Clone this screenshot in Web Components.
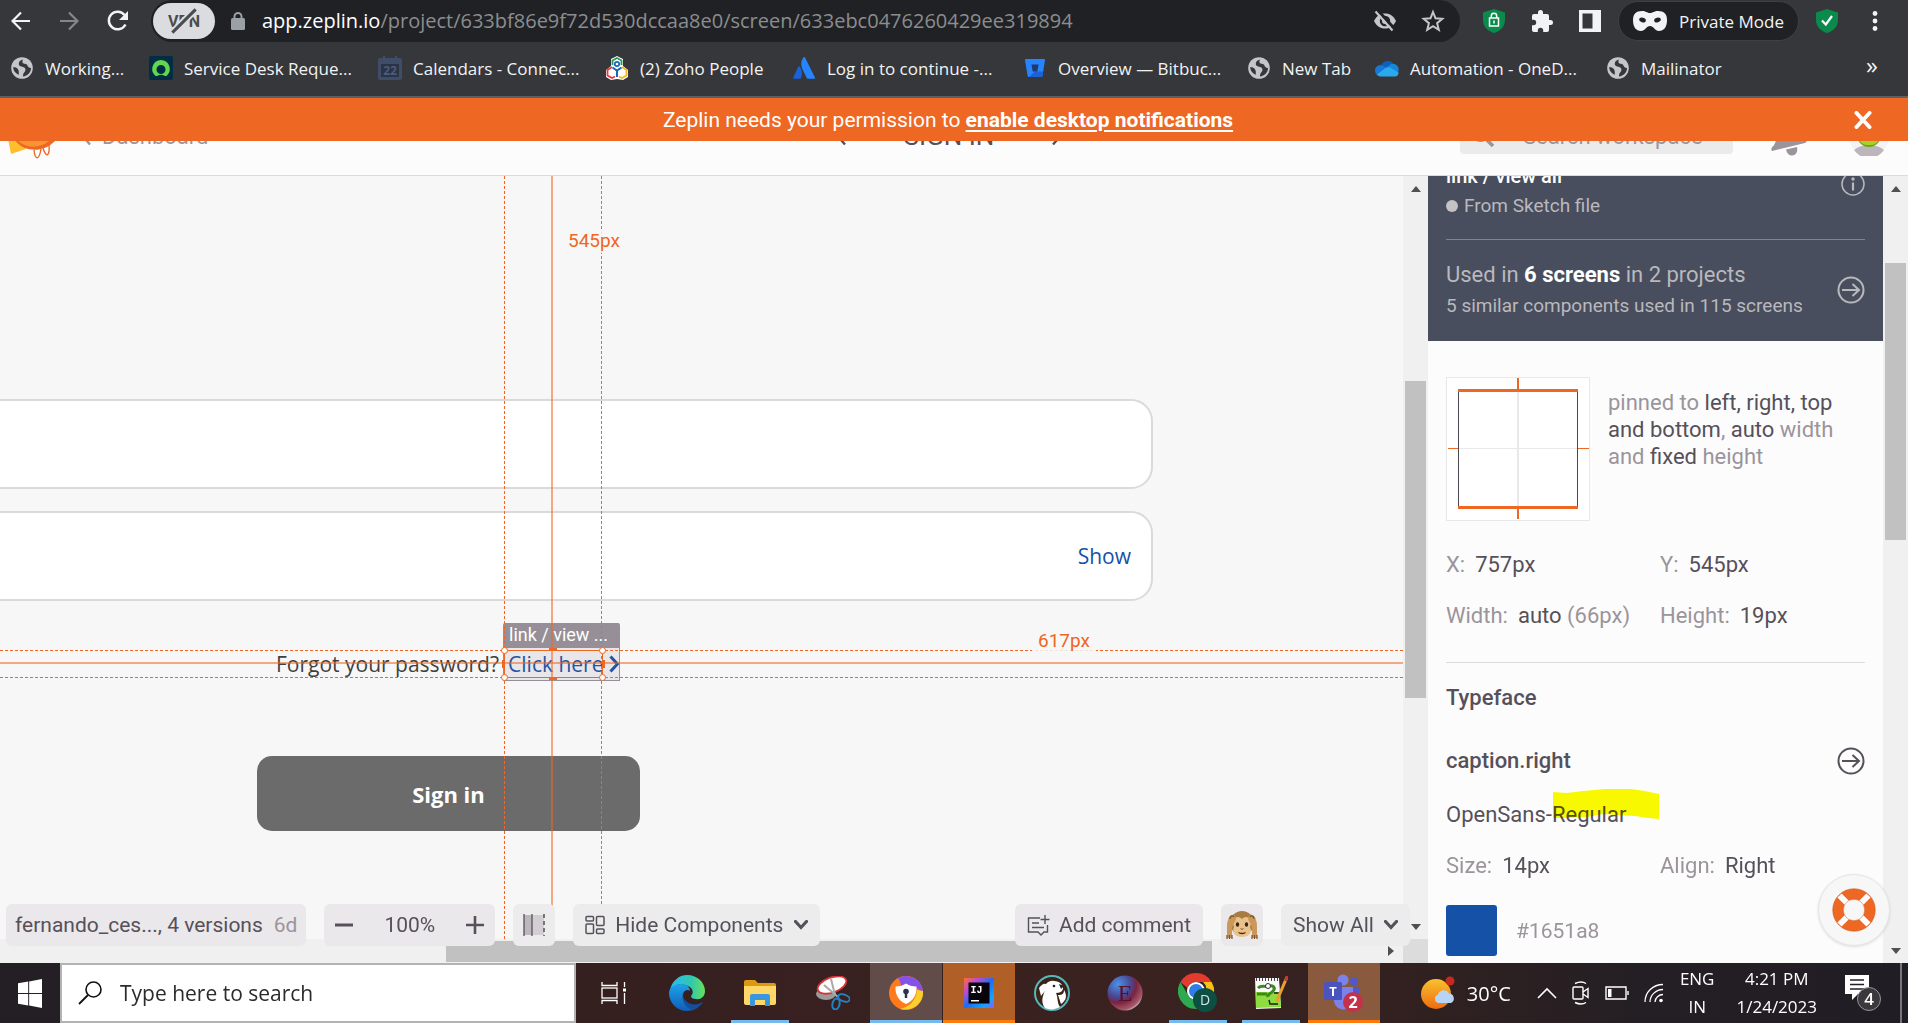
<!DOCTYPE html>
<html lang="en">
<head>
<meta charset="utf-8">
<title>Zeplin - SIGN IN</title>
<style>
html, body { height: 100%; margin: 0; }
body {
  overflow: hidden;
  font-family: "Open Sans", "Noto Sans", sans-serif;
  --orange: #ee6723;
  --ink: #56505a;
  --mute: #9b949b;
  --blue: #1651a8;
  --ui: Roboto, "Liberation Sans", sans-serif;
  --sans: "Open Sans", "Noto Sans", sans-serif;
}
</style>
</head>
<body>
<desktop-screen></desktop-screen>
<script>
const ICONS = {
  back: ['0 0 20 20', '<path d="M19 10H2M10 1.5L1.5 10l8.500 8.500" fill="none" stroke="currentColor" stroke-width="2.200"/>'],
  forward: ['0 0 20 20', '<path d="M1 10h17M10 1.500l8.500 8.500-8.500 8.500" fill="none" stroke="currentColor" stroke-width="2.200"/>'],
  reload: ['0 0 22 22', '<path d="M18.500 14.500A8.800 8.800 0 1 1 17.500 5" fill="none" stroke="currentColor" stroke-width="2.500"/><path d="M21 1v9h-9z" fill="currentColor"/>'],
  slash: ['0 0 24 24', '<path d="M2 22L22 2" stroke="#dadce0" stroke-width="6"/><path d="M2 22L22 2" stroke="#4a4c50" stroke-width="2.600"/>'],
  lock: ['0 0 14 18', '<rect y="6" width="14" height="12" rx="1.500" fill="currentColor"/><path d="M3.500 7V4.500a3.500 3.500 0 0 1 7 0V7" fill="none" stroke="currentColor" stroke-width="2"/>'],
  eyeoff: ['0 0 24 24', '<path d="M1 12C4 6 8 4.500 12 4.500S20 6 23 12c-3 6-7 7.500-11 7.500S4 18 1 12z" fill="currentColor"/><circle cx="12" cy="12" r="5.200" fill="#202124"/><circle cx="12" cy="12" r="3" fill="currentColor"/><path d="M5 1.500l18 20" stroke="#202124" stroke-width="3"/><path d="M2.500 2.500l17 19" stroke="currentColor" stroke-width="2.200"/>'],
  star: ['0 0 24 24', '<path d="M12 3l2.500 6.300 6.800.5-5.200 4.400 1.700 6.600L12 17.200l-5.800 3.600 1.700-6.600-5.200-4.400 6.800-.5z" fill="none" stroke="currentColor" stroke-width="2"/>'],
  shieldlock: ['0 0 22 24', '<path d="M11 0l11 3.500V11c0 6.500-4.500 11-11 13C4.500 22 0 17.500 0 11V3.500z" fill="#0a8a4b"/><rect x="6.500" y="9" width="9" height="8" fill="none" stroke="#fff" stroke-width="1.500"/><path d="M8.300 9V7a2.700 2.700 0 0 1 5.400 0v2M11 11.500v3" fill="none" stroke="#fff" stroke-width="1.500"/>'],
  puzzle: ['0 0 22 22', '<path d="M19.500 10H18V6a2 2 0 0 0-2-2h-4V2.500a2.500 2.500 0 0 0-5 0V4H3a2 2 0 0 0-2 2v3.800h1.500a2.700 2.700 0 0 1 0 5.400H1V20c0 1.100.9 2 2 2h3.800v-1.500a2.700 2.700 0 0 1 5.400 0V22H16a2 2 0 0 0 2-2v-5h1.500a2.500 2.500 0 0 0 0-5z" fill="currentColor"/>'],
  sidepanel: ['0 0 22 22', '<path d="M0 0h22v22H0zM3.500 3.500v15h10v-15z" fill="currentColor" fill-rule="evenodd"/>'],
  mask: ['0 0 34 20', '<path d="M9 0c4 0 5 2 8 2s4-2 8-2c6 0 9 3 9 9 0 7-3 11-8 11-4 0-5.500-5-9-5s-5 5-9 5c-5 0-8-4-8-11 0-6 3-9 9-9z" fill="#f1f3f4"/><ellipse cx="9.500" cy="9" rx="3.400" ry="2.200" fill="#202124" transform="rotate(15 9.500 9)"/><ellipse cx="24.500" cy="9" rx="3.400" ry="2.200" fill="#202124" transform="rotate(-15 24.500 9)"/>'],
  shieldcheck: ['0 0 22 24', '<path d="M11 0l11 3.500V11c0 6.500-4.500 11-11 13C4.500 22 0 17.500 0 11V3.500z" fill="#0a8a4b"/><path d="M6 11.500l3.800 4L16 7" fill="none" stroke="#fff" stroke-width="2.200"/>'],
  dots: ['0 0 6 20', '<circle cx="3" cy="2.500" r="2.400" fill="currentColor"/><circle cx="3" cy="10" r="2.400" fill="currentColor"/><circle cx="3" cy="17.500" r="2.400" fill="currentColor"/>'],
  globe: ['0 0 22 22', '<circle cx="11" cy="11" r="10.800" fill="#c3c6ca"/><path d="M12 2.500c-3 .8-4.500 2.600-4.200 4.800.3 2.300 3 2 5 3 2.300 1.200 2 3.700.4 5.200-1 1-1.200 2-1.200 4 4.500-.5 8-4 8-8.500-2 0-3-1-3.500-2.500-1-2.500-4-1-5-3-.4-1 .2-2 .5-3zM2.300 10c2 0 3.500.7 4.500 2 1.200 1.500 1 3 1 5.800C4.800 16.500 2 13.500 2.300 10z" fill="#36373a"/>'],
  desk: ['0 0 24 24', '<rect width="24" height="24" rx="2" fill="#032d42"/><path d="M12 4a9 9 0 0 0-6 15.500 2 2 0 0 0 2.500.2c2.200-1.400 4.800-1.400 7 0a2 2 0 0 0 2.500-.2A9 9 0 0 0 12 4zm0 5a4.500 4.500 0 1 1 0 9 4.500 4.500 0 0 1 0-9z" fill="#62d84e" fill-rule="evenodd"/>'],
  calendar: ['0 0 24 24', '<path d="M2 2h3V0h2v2h10V0h2v2h3a2 2 0 0 1 2 2v18a2 2 0 0 1-2 2H2a2 2 0 0 1-2-2V4c0-1.100.9-2 2-2z" fill="#3f4d68"/><path d="M3 8h18v13H3z" fill="#2b3344"/><text x="12" y="18.500" font-size="12" font-weight="700" text-anchor="middle" fill="#4a5c80">22</text>'],
  zoho: ['0 0 24 24', '<path d="M12 0l6 3v7l5 4v7l-5 3-6-1-6 1-5-3v-7l5-4V3z" fill="#fff"/><path d="M7.500 9V4.500L12 2l4.500 2.500V9" fill="none" stroke="#1f9b57" stroke-width="1.800"/><path d="M7 11l-4.500 3v5.500L7 22l3-1.500" fill="none" stroke="#e03a3a" stroke-width="1.800"/><path d="M17 11l4.500 3v5.500L17 22l-3-1.500" fill="none" stroke="#f2b61c" stroke-width="1.800"/><circle cx="12" cy="8" r="2.200" fill="none" stroke="#1c66b5" stroke-width="1.700"/><path d="M7.500 11.500l4.500 3 4.500-3M12 14v7" fill="none" stroke="#1c66b5" stroke-width="2"/>'],
  atlassian: ['0 0 22 22', '<path d="M6.500 9.500c-.5-.5-1-.4-1.300.2L.3 20.500c-.3.600.1 1.300.8 1.300h6.500c2-4 1.800-9-1.100-12.300z" fill="#1a62d6"/><path d="M10.300.5C7.500 5 8 9 9.700 12.700l4.200 8.600c.1.300.5.500.8.500h6.500c.7 0 1-.7.700-1.300L12 .6c-.3-.7-1.200-.7-1.700-.1z" fill="#2684ff"/>'],
  bitbucket: ['0 0 20 20', '<path d="M1 1h18a1 1 0 0 1 1 1.200l-2.600 16a1 1 0 0 1-1 .8H3.700a1 1 0 0 1-1-.8L0 2.200A1 1 0 0 1 1 1z" fill="#2684ff"/><path d="M10 13.500h8.200l-.8 4.700a1 1 0 0 1-1 .8H4z" fill="#1a62d6"/><path d="M6.500 6.500h7l-1.200 7H7.700z" fill="#22396b"/>'],
  onedrive: ['0 0 24 18' , '<path d="M6 7a7 7 0 0 1 13-1l-9 8z" fill="#0f5fbd"/><circle cx="5.500" cy="11.500" r="5.500" fill="#1479d4"/><circle cx="18" cy="10.500" r="5.700" fill="#1488dd"/><path d="M2 15.500L11 8.500c2-1 3.500-.5 5 .5l7.600 4.500c0 2.500-1.500 4-3.700 4H5.500C4 17.500 2.700 16.800 2 15.500z" fill="#2aa9ee"/>'],
  close: ['0 0 18 18', '<path d="M2.500 2l13 14M15.500 2L2.500 16" stroke="#fff" stroke-width="4" stroke-linecap="round"/>'],
  zeplin: ['0 0 50 60', '<path d="M-1 28l4 20 15-5-6-15z" fill="#ffbe2e"/><path d="M7 28v6c8 12 28 14 41 0l1-6z" fill="#ee6723"/><path d="M8 28v4c7 11 26 12 36 0l2-4z" fill="#f79533"/><path d="M26 44c1 10 5 11 7-1M35 42c3 10 7 9 6-4" fill="none" stroke="#ee6723" stroke-width="1.400"/>'],
  left: ['0 0 10 20', '<path d="M9 1.500L1.500 10 9 18.500" fill="none" stroke="currentColor" stroke-width="2.400"/>'],
  right: ['0 0 10 20', '<path d="M1 1.500L8.500 10 1 18.500" fill="none" stroke="currentColor" stroke-width="2.400"/>'],
  magnifier: ['0 0 24 24', '<circle cx="9.500" cy="9.500" r="7" fill="none" stroke="currentColor" stroke-width="3.200"/><path d="M14.500 14.500l7.500 7.500" stroke="currentColor" stroke-width="3.600"/>'],
  bell: ['0 0 36 40', '<path d="M1 35c-1.500-1-.5-4 1.500-5C8 22 5 8 16 4c12-3 11 12 18 18 2 1 2.500 4 0 5z" fill="currentColor"/><path d="M15 33.500l11-2.500c1 5-1 8-5 8.500-3 0-5-2-6-6z" fill="currentColor"/>'],
  avatar: ['0 0 40 40', '<circle cx="20" cy="20" r="20" fill="#f4f3f4"/><path d="M5 34a17 9 0 0 1 30 0 18 18 0 0 1-30 0z" fill="#bcb6bc"/><circle cx="20" cy="19" r="12" fill="#6fa61b"/><path d="M20 29A10 10 0 0 0 31 21c-6 4-16 4-22 0a10 10 0 0 0 11 8z" fill="#a5d12a"/>'],
  info: ['0 0 24 24', '<circle cx="12" cy="12" r="11" fill="none" stroke="currentColor" stroke-width="1.500"/><circle cx="12" cy="7" r="1.700" fill="currentColor"/><path d="M12 10.500v8" stroke="currentColor" stroke-width="2.200"/>'],
  go: ['0 0 28 28', '<circle cx="14" cy="14" r="12.500" fill="none" stroke="currentColor" stroke-width="2"/><path d="M5 14h16.500M15.500 8l6.500 6-6.500 6" fill="none" stroke="currentColor" stroke-width="2"/>'],
  pins: ['0 0 144 144', '<rect x=".5" y=".5" width="143" height="143" fill="#fff" stroke="#e9e8e9"/><path d="M72 12v120" stroke="#e9e8e9" stroke-width="2"/><path d="M12 71.500h120" stroke="#e9e8e9"/><path d="M12.500 12v120M131.500 12v120" stroke="#4d4850"/><path d="M12 13.500h120M12 130.500h120" stroke="#ee6723" stroke-width="3"/><path d="M72 1v12M72 131v11" stroke="#ee6723" stroke-width="2"/><path d="M2 71.500h10M132 71.500h11" stroke="#ee6723"/>'],
  highlight: ['0 0 106 30', '<path d="M0 3l14 1 16-2 22-2h26l14 2 14 3v25l-11-1-13-2-18-1-14-1-16 3-18 1H0z" fill="#fbfc00"/>'],
  lifebuoy: ['0 0 44 44', '<circle cx="22" cy="22" r="16" fill="none" stroke="#ee6723" stroke-width="10.500"/><g stroke="#fff" stroke-width="6"><path d="M7.500 7.500l8 8M36.500 7.500l-8 8M7.500 36.500l8-8M36.500 36.500l-8-8"/></g><circle cx="22" cy="22" r="21.300" fill="none" stroke="#c9541b" stroke-opacity=".5"/><circle cx="22" cy="22" r="10.700" fill="none" stroke="#c9541b" stroke-opacity=".5"/>'],
  minus: ['0 0 20 20', '<path d="M1 10h18" stroke="currentColor" stroke-width="3"/>'],
  plus: ['0 0 20 20', '<path d="M1 10h18M10 1v18" stroke="currentColor" stroke-width="2.600"/>'],
  layout: ['0 0 22 24', '<path d="M1 2h8v20H1z" fill="#bdb6be"/><path d="M9 2h12v20H9z" fill="#d3ced4"/><path d="M1 1v22M9 1v22" stroke="#56505a" stroke-width="1.300"/><path d="M21 1v22" stroke="#56505a" stroke-width="1.500" stroke-dasharray="4 3"/>'],
  grid: ['0 0 20 20', '<g fill="none" stroke="currentColor" stroke-width="1.500"><rect x="1" y="1.500" width="7.500" height="4.500" rx="1"/><rect x="1" y="9" width="7.500" height="9.500" rx="1"/><rect x="11.500" y="1.500" width="7.500" height="9" rx="1"/><rect x="11.500" y="14" width="7.500" height="4.500" rx="1"/></g>'],
  chevron: ['0 0 14 10', '<path d="M1.500 1.500L7 7.500l5.500-6" fill="none" stroke="currentColor" stroke-width="3.200" stroke-linecap="round"/>'],
  comment: ['0 0 24 22', '<path d="M13 4H1.500v14H11l3 3 3-3h3.500v-7M18 1v9M13.500 5.500h9M5 9h7M5 13.500h12" fill="none" stroke="currentColor" stroke-width="1.400"/>'],
  monkey: ['0 0 32 30', '<ellipse cx="16" cy="13" rx="12" ry="12" fill="#a87b44"/><path d="M16 9c3-4 9-2 9 4 0 2-1 3-1 4 3 6-2 10-8 10s-11-4-8-10c0-1-1-2-1-4 0-6 6-8 9-4z" fill="#e9c18b"/><path d="M2 10c1-6 7-7 8-2 0 4-4 5-4 12v8H1V18c0-3 0-5 1-8zM30 10c-1-6-7-7-8-2 0 4 4 5 4 12v8h5V18c0-3 0-5-1-8z" fill="#c9985a"/><path d="M4 9c0-3 3-4 4-2M28 9c0-3-3-4-4-2M1 29v-4M3.500 29v-4M6 29v-4M26 29v-4M28.500 29v-4M31 29v-4" fill="none" stroke="#7a5228" stroke-width="1.200"/><ellipse cx="11.500" cy="14.500" rx="1.700" ry="2.300" fill="#3a2312"/><ellipse cx="20.500" cy="14.500" rx="1.700" ry="2.300" fill="#3a2312"/><path d="M14.500 18.500l1.500 1 1.500-1" fill="none" stroke="#7a5228"/><path d="M12 22c2 1 6 1 8 0-1 3-7 3-8 0z" fill="#4c2412"/>'],
  linkarrow: ['0 0 10 18', '<path d="M1.500 1.500L8.500 9l-7 7.500" fill="none" stroke="#1651a8" stroke-width="3"/>'],
  windows: ['0 0 20 24', '<path d="M0 3.400L8.500 2v9.500H0zM9.300 1.900L20 0v11.500H9.300zM0 12.500h8.500V22L0 20.600zM9.300 12.500H20V24L9.300 22.100z" fill="#fff"/>'],
  find: ['0 0 24 24', '<circle cx="15.500" cy="8.500" r="7.500" fill="none" stroke="#111" stroke-width="1.600"/><path d="M10 14L1 23" stroke="#111" stroke-width="1.800"/>'],
  taskview: ['0 0 26 24', '<g fill="none" stroke="#fff" stroke-width="1.300"><rect x="1" y="7" width="15" height="10"/><path d="M1 1v3.500h15V1M1 23v-3.500h15V23M23.500 1v5M23.500 12v11"/></g><path d="M22 7.500h3v3h-3z" fill="#fff"/>'],
  edge: ['0 0 36 36', '<defs><linearGradient id="ea" x1="0" x2="1"><stop offset="0" stop-color="#2fb8f0"/><stop offset=".6" stop-color="#2fc8b0"/><stop offset="1" stop-color="#68e05a"/></linearGradient><linearGradient id="eb" x2="0" y2="1"><stop offset="0" stop-color="#1fa3ec"/><stop offset="1" stop-color="#0f5db4"/></linearGradient></defs><path d="M1 15C3 6 10 0 18 0c11 0 18 8 18 16 0 6-5 9-9 8-3 0-5-1-5-3 3-3 2-8-3-10C12 8 4 10 1 15z" fill="url(#ea)"/><path d="M0 18c0-6 6-9 12-9 5 0 9 3 9 7-2-2-6-1-7 3-1 5 2 10 8 11 4 1 8 0 11-3C30 33 24 36 18 36 8 36 0 28 0 18z" fill="url(#eb)"/><path d="M14 19c-2 7 3 14 10 16 4-1 8-5 10-8-3 2-8 3-12 2-5-2-8-5-8-10z" fill="#124f9c"/>'],
  folder: ['0 0 32 28', '<path d="M0 3a2 2 0 0 1 2-2h9l3 3h16a2 2 0 0 1 2 2v4H0z" fill="#dd9a10"/><path d="M0 7h32v17a2 2 0 0 1-2 2H2a2 2 0 0 1-2-2z" fill="#ffd766"/><path d="M6 27V17a2 2 0 0 1 2-2h16a2 2 0 0 1 2 2v10h-5v-6H11v6z" fill="#3a96dd"/>'],
  snip: ['0 0 34 34', '<ellipse cx="10" cy="18" rx="10" ry="6" fill="#9b9b9b"/><ellipse cx="16" cy="9" rx="15" ry="7.500" fill="#fff" stroke="#d53535" stroke-width="1.800" transform="rotate(-20 16 9)"/><path d="M8 9l14 12M15 3l4 16" stroke="#aaa" stroke-width="2"/><ellipse cx="28" cy="22" rx="6" ry="3.300" fill="none" stroke="#2383c4" stroke-width="2" transform="rotate(20 28 22)"/><ellipse cx="20" cy="28" rx="3.500" ry="5.500" fill="none" stroke="#2383c4" stroke-width="2" transform="rotate(15 20 28)"/>'],
  avast: ['0 0 34 34', '<circle cx="17" cy="17" r="17" fill="#ff7a1a"/><path d="M9 2a17 17 0 0 1 25 15c-5-6-15-9-22-6 0-4-1-6-3-9z" fill="#8452e8"/><path d="M34 15c1 12-10 21-23 18 9-2 16-8 17-19z" fill="#f8cf2d"/><path d="M17 7.500c3 2 6 3 10.500 3C28 19 24 25 17 28 10 25 6 19 6.500 10.500 11 10.500 14 9.500 17 7.500z" fill="#fff"/><circle cx="17" cy="15.500" r="2.800" fill="#2b3350"/><path d="M15.800 16h2.400v6h-2.400z" fill="#2b3350"/>'],
  intellij: ['0 0 30 30', '<defs><linearGradient id="ij" x2="1" y2="1"><stop offset="0" stop-color="#ff6d2d"/><stop offset=".25" stop-color="#c14bd0"/><stop offset=".5" stop-color="#1b6df5"/><stop offset=".8" stop-color="#12a5ff"/><stop offset="1" stop-color="#9a55ff"/></linearGradient></defs><path d="M0 0h30v30H0z" fill="url(#ij)"/><path d="M4.500 4.500h21v21h-21z" fill="#08040a"/><text x="6.500" y="15" font-size="10" font-family="Liberation Mono, monospace" font-weight="700" fill="#fff">IJ</text><path d="M7 22h8v1.500H7z" fill="#fff"/>'],
  beaver: ['0 0 36 36', '<circle cx="18" cy="18" r="17" fill="#3a2417" stroke="#56b7bd" stroke-width="2"/><path d="M11 33c-6-8 0-15 0-19-1-5 4-9 9-8 6 0 9 4 9 8-1 3-4 4-7 4 2 4 1 10 4 14-5 3-11 3-15 1z" fill="#fff"/><path d="M5 13c4-5 6-5 8-3 0 5-3 7-6 11z" fill="#fff"/><circle cx="20" cy="11" r="1.300" fill="#222"/><path d="M25 9l5 2-3 3z" fill="#222"/><path d="M24 20c5 0 6-2 6-5 3 5 3 10-3 14z" fill="#fff"/>'],
  eball: ['0 0 36 36', '<defs><radialGradient id="eg" cx=".3" cy=".25" r=".85"><stop offset="0" stop-color="#4a92e8"/><stop offset=".45" stop-color="#4a4590"/><stop offset=".62" stop-color="#7a2440"/><stop offset=".88" stop-color="#a6586b"/><stop offset="1" stop-color="#ddd"/></radialGradient></defs><circle cx="18" cy="18" r="17.500" fill="url(#eg)"/><text x="18" y="26" text-anchor="middle" font-size="24" font-family="Liberation Serif, serif" fill="#5c1028">E</text>'],
  chrome: ['0 0 40 40', '<path d="M18 0a18 18 0 0 1 15.600 9H18a9 9 0 0 0-8.500 6L2.400 9A18 18 0 0 1 18 0z" fill="#e33b2e"/><path d="M33.600 9A18 18 0 0 1 18 36l8-14a9 9 0 0 0-1-13z" fill="#fbc116"/><path d="M2.400 9A18 18 0 0 0 18 36l7-12a9 9 0 0 1-15-2z" fill="#2da94f"/><circle cx="18" cy="18" r="9" fill="#fff"/><circle cx="18" cy="18" r="7" fill="#2f7de9"/><circle cx="27" cy="27" r="12" fill="#0d4f43"/><text x="27" y="32" text-anchor="middle" font-size="14" fill="#cfe8e2">D</text>'],
  notepad: ['0 0 34 34', '<path d="M1 2l24 0 2 30-25 1z" fill="#f8f8f8"/><path d="M2 16h24l1 15-25 1z" fill="#8fdc3e"/><path d="M4 12c4-4 8 0 12-2 3-1 6 2 3 5-2 3-6 3-5 6M3 18h10" fill="none" stroke="#3c8a1c" stroke-width="3"/><path d="M15 24l1 4h8M20 17h6" fill="none" stroke="#1d1d1d" stroke-width="1.400"/><circle cx="14" cy="10" r="2.500" fill="#fff" stroke="#333"/><path d="M33 1l-9 21-1 4" stroke="#e9a02a" stroke-width="3" fill="none"/><path d="M33.500 0l-2 5" stroke="#c03a3a" stroke-width="3"/><path d="M2 3.500h22" stroke="#444" stroke-width="3" stroke-dasharray="1 2"/>'],
  teams: ['0 0 40 38', '<circle cx="19" cy="6" r="5.500" fill="#7b83eb"/><circle cx="30" cy="7.500" r="4" fill="#5059c9"/><path d="M24 13h11v10a6 6 0 0 1-11 3z" fill="#5059c9"/><path d="M10 13h19v12a9 9 0 0 1-19 2z" fill="#7b83eb"/><rect y="8" width="18" height="18" rx="1.500" fill="#4b53bc"/><text x="9" y="22" text-anchor="middle" font-size="13" font-weight="700" fill="#fff">T</text><circle cx="29" cy="28" r="10" fill="#c4314b"/><text x="29" y="34" text-anchor="middle" font-size="16" font-weight="700" fill="#fff">2</text>'],
  weather: ['0 0 34 34', '<defs><linearGradient id="wg" x2="0" y2="1"><stop offset="0" stop-color="#f9c22e"/><stop offset="1" stop-color="#ee6a10"/></linearGradient></defs><circle cx="15" cy="18" r="15" fill="url(#wg)"/><circle cx="29" cy="5" r="4.500" fill="#c42b1c"/><path d="M17 27a4.500 4.500 0 0 1 0-8.500 6 6 0 0 1 11-1 5 5 0 0 1 2 9.500z" fill="#b9d3f5"/>'],
  up: ['0 0 20 12', '<path d="M1 11l9-9 9 9" fill="none" stroke="#fff" stroke-width="1.600"/>'],
  meet: ['0 0 18 24', '<rect x="1" y="6" width="10" height="12" rx="1" fill="none" stroke="#fff" stroke-width="1.400"/><path d="M11 11l5-3.500v9L11 13M3 2.500c4-2 8-2 11 0M3 21.500c4 2 8 2 11 0" fill="none" stroke="#fff" stroke-width="1.400"/>'],
  battery: ['0 0 24 14', '<path d="M1 1h20v12H1zM23 5v4" fill="none" stroke="#fff" stroke-width="1.400"/><path d="M3 3h3.500v8H3z" fill="#fff"/>'],
  wifi: ['0 0 20 20', '<path d="M1 19C1 9 9 1.500 19 1.500M6 19c0-7 6-12.500 13-12.500M11 19c0-4 4-7.500 8-7.500" fill="none" stroke="#fff" stroke-width="1.300"/><circle cx="17" cy="17.500" r="1.800" fill="#fff"/>'],
  notice: ['0 0 36 36', '<path d="M0 0h24v19H13l-6 6v-6H0z" fill="#fff"/><path d="M5 5h14M5 9.500h14M5 14h14" stroke="#231f24" stroke-width="1.400"/><circle cx="24" cy="24" r="11.500" fill="#3b383c" stroke="#97959a"/><text x="24" y="30" text-anchor="middle" font-size="17" font-weight="600" fill="#fff">4</text>']
};

function define(name, html, setup) {
  customElements.define(name, class extends HTMLElement {
    constructor() {
      super();
      const template = document.createElement('template');
      template.innerHTML = '<style>*{box-sizing:border-box}button,input,select{font:inherit;color:inherit;border:0;padding:0;margin:0;background:none;appearance:none;border-radius:0;outline:0}a{color:inherit;text-decoration:none}</style>' + html;
      this.attachShadow({ mode: 'open' }).append(template.content.cloneNode(true));
    }
    connectedCallback() { if (setup) setup(this, this.shadowRoot); }
  });
}

define('ui-icon', '', (el, root) => {
  const [box, art] = ICONS[el.getAttribute('name')];
  const [, , w, h] = box.split(' ');
  const width = el.getAttribute('w') || w;
  root.innerHTML = '<style>:host{display:block;flex:none}svg{display:block;font-family:"Open Sans",sans-serif}</style>' +
    `<svg aria-hidden="true" width="${width}" height="${Math.round(width * h / w)}" viewBox="${box}">${art}</svg>`;
});

define('browser-toolbar', `<style>
:host{display:flex;align-items:center;height:42px;background:#36373a;color:#f1f3f4;padding:0 30px 0 11px}
.nav{display:flex;gap:28px;align-items:center;padding-right:22px}
.fwd{color:#85868a}
.omni{flex:1;display:flex;align-items:center;height:42px;background:#202124;border-radius:21px;padding:0 15px 0 2px;color:#9aa0a6;font-size:20px}
.vpn{display:grid;place-items:center;width:62px;height:36px;border-radius:18px;background:#dadce0;color:#4a4c50;font:700 16px var(--ui);margin-right:16px}
.vpn>*{grid-area:1/1}
.url{flex:1;margin-left:17px;line-height:28px;white-space:nowrap;color:#8b8d90;outline:0}
.url b{font-weight:400;color:#fff}
.in{display:flex;gap:24px;color:#c4c6c9}
.ext{display:flex;align-items:center;gap:26px;margin-left:23px}
.mode{display:flex;align-items:center;gap:12px;height:40px;padding:0 14px;border:1px solid #3f4044;border-radius:20px;background:#202124;font-size:17px;margin:0 -9px}
.ok{margin-right:8px}
</style>
<nav class="nav"><button aria-label="Back"><ui-icon name="back"></ui-icon></button><button class="fwd" aria-label="Forward"><ui-icon name="forward"></ui-icon></button><button aria-label="Reload"><ui-icon name="reload"></ui-icon></button></nav>
<div class="omni"><button class="vpn"><span>VPN</span><ui-icon name="slash" w="28"></ui-icon></button><ui-icon name="lock"></ui-icon>
<div class="url" contenteditable="true" spellcheck="false" role="textbox" aria-label="Address"><b>app.zeplin.io</b>/project/633bf86e9f72d530dccaa8e0/screen/633ebc0476260429ee319894</div>
<div class="in"><button aria-label="Tracking"><ui-icon name="eyeoff"></ui-icon></button><button aria-label="Bookmark"><ui-icon name="star"></ui-icon></button></div></div>
<div class="ext"><button aria-label="Secure"><ui-icon name="shieldlock"></ui-icon></button><button aria-label="Extensions"><ui-icon name="puzzle"></ui-icon></button><button aria-label="Side panel"><ui-icon name="sidepanel"></ui-icon></button>
<button class="mode"><ui-icon name="mask"></ui-icon>Private Mode</button>
<button class="ok" aria-label="Protected"><ui-icon name="shieldcheck"></ui-icon></button><button aria-label="Menu"><ui-icon name="dots"></ui-icon></button></div>`);

define('book-mark', `<style>:host{display:block}a{display:grid;grid-template-columns:24px auto;gap:11px;align-items:center;justify-content:start;justify-items:center;white-space:nowrap}</style>
<a href="#"><slot></slot></a>`, (el, root) => {
  const icon = document.createElement('ui-icon');
  icon.setAttribute('name', el.getAttribute('icon'));
  root.querySelector('a').prepend(icon);
});

define('bookmarks-bar', `<style>
:host{display:flex;align-items:center;height:56px;padding:0 30px 2px 10px;background:#36373a;border-bottom:2px solid #5f6063;color:#f1f3f4;font-size:17px;box-sizing:border-box}
.row{flex:1;display:grid;grid-template-columns:139px 229px 227px 187px 231px 224px 128px 231px auto;align-items:center}
button{font-size:24px;line-height:24px;padding-bottom:6px}
</style>
<div class="row"><book-mark icon="globe">Working...</book-mark><book-mark icon="desk">Service Desk Reque...</book-mark><book-mark icon="calendar">Calendars - Connec...</book-mark><book-mark icon="zoho">(2) Zoho People</book-mark><book-mark icon="atlassian">Log in to continue -...</book-mark><book-mark icon="bitbucket">Overview — Bitbuc...</book-mark><book-mark icon="globe">New Tab</book-mark><book-mark icon="onedrive">Automation - OneD...</book-mark><book-mark icon="globe">Mailinator</book-mark></div>
<button>»</button>`);

define('notice-bar', `<style>
:host{display:flex;align-items:center;height:43px;background:var(--orange);color:#fff;font:400 21px var(--ui);padding:0 36px 0 42px}
p{flex:1;margin:0;text-align:center}a{font-weight:700;text-decoration:underline;text-underline-offset:3px;text-decoration-thickness:2px}
</style>
<p>Zeplin needs your permission to <a href="#">enable desktop notifications</a></p><button aria-label="Close"><ui-icon name="close"></ui-icon></button>`);

define('app-header', `<style>
:host{display:flex;align-items:flex-end;height:35px;box-sizing:border-box;overflow:hidden;background:#fcfcfc;border-bottom:1px solid #dcdcdc;font:400 22px var(--ui);color:var(--ink)}
.bar{flex:1;display:grid;grid-template-columns:1fr auto 1fr;align-items:center;height:78px}
.side{display:flex;align-items:center;color:var(--mute)}
.side a{display:flex;align-items:center;gap:11px}
.brand{margin:0 23px 0 8px}
.end{justify-content:flex-end;padding-right:19px}
.title{display:flex;align-items:center;gap:58px;font-size:26px;padding-right:10px;color:var(--ink)}
label{display:flex;align-items:center;gap:28px;width:273px;height:36px;padding:0 11px;background:#ebebeb;border-radius:4px;margin-right:38px}
input{width:200px}input::placeholder{color:var(--mute);opacity:1}
.end button+button{margin-left:42px}
</style>
<div class="bar"><div class="side"><ui-icon class="brand" name="zeplin"></ui-icon><a href="#"><ui-icon name="left"></ui-icon>Dashboard</a></div>
<div class="title"><button aria-label="Previous screen"><ui-icon name="left"></ui-icon></button><span>SIGN IN</span><button aria-label="Next screen"><ui-icon name="right"></ui-icon></button></div>
<div class="side end"><label><ui-icon name="magnifier"></ui-icon><input placeholder="Search workspace" aria-label="Search workspace"></label><button aria-label="Notifications"><ui-icon name="bell"></ui-icon></button><button aria-label="Account"><ui-icon name="avatar"></ui-icon></button></div></div>`);

define('scroll-bar', `<style>
:host{display:flex;flex-direction:column;flex:none;width:25px;background:#f0f0f0}
:host([across]){flex-direction:row;width:auto;height:24px}
button{flex:0 0 25px;display:grid;place-items:center}
i{display:block;border:5px solid transparent;border-bottom:6px solid #505050;border-top:0}
.end i{transform:rotate(180deg)}
:host([across]) i{transform:rotate(-90deg)}:host([across]) .end i{transform:rotate(90deg)}
.thumb{background:#c1c1c1;margin:0 2px}:host([across]) .thumb{margin:2px 0 1px}
</style>
<button tabindex="-1" aria-label="Scroll back"><i></i></button><span class="a"></span><span class="thumb"></span><span class="b"></span><button tabindex="-1" class="end" aria-label="Scroll on"><i></i></button>`, (el, root) => {
  const parts = el.getAttribute('parts').split(' ');
  ['.a', '.thumb', '.b'].forEach((s, i) => root.querySelector(s).style.flex = parts[i] + ' 1 0px');
});

define('sign-in-form', `<style>
:host{display:block;font:400 21px var(--sans);color:#3f3f3f}
form{padding-top:223px}
.field{display:flex;align-items:center;height:90px;margin:0 250px 22px -30px;background:#fff;border:2px solid #dadada;border-radius:22px;padding:0 20px 0 50px}
.field input{flex:1;height:100%;min-width:0}
.show{color:var(--blue)}
.help{display:flex;align-items:center;height:28px;margin:49px 0 0 276px;white-space:nowrap}
.help a{color:var(--blue);margin-left:9px;display:flex;align-items:center;gap:6px}
.submit{display:block;width:383px;height:75px;margin:78px 0 0 257px;border-radius:15px;background:#6b6b6b;color:#fff;font-weight:700;font-size:22px}
</style>
<form><div class="field"><input aria-label="Email"></div><div class="field"><input type="password" aria-label="Password"><button type="button" class="show">Show</button></div>
<div class="help">Forgot your password?<a href="#">Click here<ui-icon name="linkarrow"></ui-icon></a></div>
<button type="button" class="submit">Sign in</button></form>`);

define('measure-overlay', `<style>
:host{position:absolute;inset:0;pointer-events:none;font:400 19px var(--ui);color:var(--orange)}
div{position:absolute}
.v{top:0;bottom:0;width:1px;background:repeating-linear-gradient(var(--orange) 0 3px,transparent 3px 5px)}
.h{left:0;right:0;height:1px;background:repeating-linear-gradient(90deg,var(--orange) 0 3px,transparent 3px 5px)}
.sv{left:551px;top:0;bottom:0;width:2px;background:rgba(238,103,35,.55)}
.sh{top:486px;left:0;right:0;height:2px;background:rgba(238,103,35,.55)}
.tag{background:rgba(247,247,247,.85);padding:0 6px;line-height:24px}
.box{left:503px;top:471px;width:117px;height:34px;background:rgba(120,110,120,.12);border:1px solid #978f97}
.name{left:503px;top:447px;width:117px;height:25px;border-radius:2px 2px 0 0;background:#978f97;color:#fff;font-size:18px;line-height:24px;padding-left:6px;white-space:nowrap}
.sel{left:504px;top:474px;width:99px;height:28px;border:1px solid var(--orange)}
.sel i{position:absolute;width:7px;height:7px;border:1px solid var(--orange);border-radius:4px;background:#fff}
.sel b{position:absolute;background:var(--orange)}
</style>
<div class="box"></div><div class="name">link / view ...</div>
<div class="v" style="left:504px"></div><div class="v" style="left:601px"></div><div class="h" style="top:474px"></div><div class="h" style="top:501px"></div><div class="sv"></div><div class="sh"></div>
<div class="sel"><i style="left:-4px;top:-4px"></i><i style="right:-4px;top:-4px"></i><i style="left:-4px;bottom:-4px"></i><i style="right:-4px;bottom:-4px"></i>
<b style="left:44px;top:-3px;width:8px;height:3px"></b><b style="left:44px;bottom:-3px;width:8px;height:3px"></b><b style="left:-3px;top:9px;width:3px;height:8px"></b><b style="right:-3px;top:9px;width:3px;height:8px"></b></div>
<div class="tag" style="left:562px;top:53px">545px</div><div class="tag" style="left:1032px;top:453px">617px</div>`);

define('canvas-tools', `<style>
:host{position:absolute;left:6px;right:18px;bottom:17px;display:flex;justify-content:space-between;font:400 21px var(--ui);color:var(--ink)}
.g{display:flex;gap:18px}
.t{display:flex;align-items:center;height:42px;border-radius:6px;background:#eae8ea;padding:0 12px;white-space:nowrap}
.n{background:#ececec}
.ver{padding:0 9px}
.zoom{padding:0 10px}
.mute{color:var(--mute);margin-left:11px}
output{margin:0 30px}
.sel{gap:10px}
.add{gap:8px}
.pic{padding:0 5px}
</style>
<div class="g"><button class="t ver"><span>fernando_ces..., 4 versions</span><span class="mute">6d</span></button>
<div class="t zoom"><button aria-label="Zoom out"><ui-icon name="minus"></ui-icon></button><output>100%</output><button aria-label="Zoom in"><ui-icon name="plus"></ui-icon></button></div>
<button class="t n zoom" aria-label="Layout"><ui-icon name="layout"></ui-icon></button>
<label class="t n sel"><ui-icon name="grid"></ui-icon><select aria-label="Components"><option>Hide Components</option></select><ui-icon name="chevron"></ui-icon></label></div>
<div class="g"><button class="t add"><ui-icon name="comment"></ui-icon>Add comment</button><button class="t pic" aria-label="Monkey"><ui-icon name="monkey"></ui-icon></button>
<label class="t n sel"><select aria-label="Comments shown"><option>Show All</option></select><ui-icon name="chevron"></ui-icon></label></div>`);

define('design-canvas', `<style>
:host{position:relative;flex:1;min-width:0;display:flex;flex-direction:column;background:#f7f7f7}
.top{flex:1;display:flex;min-height:0}
.art{position:relative;flex:1;min-width:0;overflow:hidden}
.low{display:flex;background:#dcdcdc;overflow:hidden}
.low scroll-bar{flex:1;margin:0 25px 0 -22px}
</style>
<div class="top"><div class="art"><sign-in-form></sign-in-form><measure-overlay></measure-overlay></div><scroll-bar parts="180 317 216"></scroll-bar></div>
<div class="low"><scroll-bar across parts="443 766 166"></scroll-bar></div><canvas-tools></canvas-tools>`);

define('inspector-panel', `<style>
:host{flex:none;width:455px;height:100%;overflow:hidden;background:#fcfcfc;font:400 22px/28px var(--ui);color:var(--ink)}
.dark{margin-top:-14px;padding:0 18px 23px;background:#484e5e;color:#bab8bd}
.row{display:flex;align-items:center;justify-content:space-between}
h2,h3,p{margin:0;font-size:inherit;font-weight:500}p{font-weight:400}
h2{font-size:20px;color:#fff}
.s{font-size:19px;line-height:24px}
.src{display:flex;align-items:center;gap:6px;margin-top:4px}
.src i{width:12px;height:12px;border-radius:50%;background:#c5c2c6}
hr{border:0;height:1px;background:#7f8390;margin:21px 0}
.used p+p{margin-top:5px}.used b{color:#fff;font-weight:700}
.info{height:28px;padding-top:10px}
.body{padding:36px 18px 0}
.pins{display:flex;gap:18px}.pins p{width:240px;line-height:27px;padding-top:12px;color:var(--mute)}
b{font-weight:400;color:var(--ink)}
dl{display:grid;grid-template-columns:214px 1fr;gap:23px 0;margin:30px 0 0}
dl div{display:flex;gap:10px;white-space:nowrap}dt,.m{color:var(--mute)}dd{margin:0}
.body hr{background:#dcdcdc;margin:32px 0 21px}
.cap{margin-top:35px}
.face{position:relative;margin-top:26px}
.face ui-icon{position:absolute;left:107px;top:-12px;mix-blend-mode:multiply}
.size{margin-top:23px}
.col{display:flex;align-items:center;gap:19px;margin-top:25px;color:var(--mute);font-size:21px}
.col i{width:51px;height:51px;border-radius:3px;background:var(--blue)}
</style>
<section class="dark"><div class="row"><h2>link / view all</h2><button class="info" aria-label="Info"><ui-icon name="info"></ui-icon></button></div>
<div class="s src"><i></i><span>From Sketch file</span></div><hr>
<div class="row used"><div><p>Used in <b>6 screens</b> in 2 projects</p><p class="s">5 similar components used in 115 screens</p></div><button aria-label="Open usages"><ui-icon name="go"></ui-icon></button></div></section>
<section class="body"><div class="pins"><ui-icon name="pins"></ui-icon><p>pinned to <b>left, right, top and bottom</b>, <b>auto</b> width and <b>fixed</b> height</p></div>
<dl><div><dt>X:</dt><dd>757px</dd></div><div><dt>Y:</dt><dd>545px</dd></div><div><dt>Width:</dt><dd>auto <span class="m">(66px)</span></dd></div><div><dt>Height:</dt><dd>19px</dd></div></dl><hr>
<h3>Typeface</h3><div class="row cap"><h3>caption.right</h3><button aria-label="Open style" style="height:28px"><ui-icon name="go"></ui-icon></button></div>
<p class="face">OpenSans-Regular<ui-icon name="highlight"></ui-icon></p>
<dl class="size"><div><dt>Size:</dt><dd>14px</dd></div><div><dt>Align:</dt><dd>Right</dd></div></dl>
<div class="col"><i></i><span>#1651a8</span></div></section>`);

define('work-space', `<style>
:host{position:relative;flex:1;display:flex;min-height:0;overflow:hidden}
.helper{position:absolute;right:18px;bottom:17px;width:72px;height:72px;border-radius:50%;background:#f7f7f7;border:1px solid #e4e4e4;box-shadow:0 1px 3px rgba(0,0,0,.12);display:grid;place-items:center}
</style>
<design-canvas></design-canvas><inspector-panel></inspector-panel><scroll-bar parts="62 277 398"></scroll-bar>
<button class="helper" aria-label="Help"><ui-icon name="lifebuoy"></ui-icon></button>`);

define('task-item', `<style>
:host{display:grid;place-items:center;width:72px;height:60px;position:relative}
:host([open])::after{content:"";position:absolute;left:7px;right:7px;bottom:0;height:3px;background:#76b9ed}
:host([active]){background:#624c4a}:host([active])::after{left:0;right:0}
:host([alert]){background:#b06026}:host([alert])::after{left:0;right:0;background:#ff7a0a}
:host([soft]){background:#8a5a3f}
</style><button><slot></slot></button>`);

define('task-bar', `<style>
:host{display:flex;align-items:center;height:60px;background:linear-gradient(90deg,#231f25 0,#2a1f22 20%,#36201f 33%,#3a2220 60%,#33211f 72%,#241f24 86%,#211d24 100%);color:#fff;font-size:17px}
.start{width:60px;height:60px;display:grid;place-items:center}
label{width:516px;height:60px;background:#fff;border:2px solid #b3b3b3;display:flex;align-items:center;gap:18px;padding:0 16px;color:#2b2b2b;font-size:21px}
input{flex:1;min-width:0}input::placeholder{color:#2b2b2b;opacity:1}
.apps{display:flex;gap:1px;margin-left:2px;flex:1}
.tray{display:flex;align-items:center;padding-right:6px}
.tray>*{flex:none}
.temp{display:flex;align-items:center;gap:12px;font-size:20px;margin-right:26px}
.ic{display:flex;align-items:center;gap:15px}
.two{text-align:center;line-height:28px}
.lang{margin-left:16px}.clock{margin:0 28px 0 22px}
.edge{width:2px;height:60px;background:#77747a;margin-left:19px}
</style>
<button class="start" aria-label="Start"><ui-icon name="windows" w="24"></ui-icon></button>
<label><ui-icon name="find"></ui-icon><input placeholder="Type here to search" aria-label="Type here to search"></label>
<div class="apps"><task-item><ui-icon name="taskview"></ui-icon></task-item><task-item><ui-icon name="edge"></ui-icon></task-item><task-item open><ui-icon name="folder"></ui-icon></task-item><task-item><ui-icon name="snip"></ui-icon></task-item><task-item open active><ui-icon name="avast"></ui-icon></task-item><task-item open alert><ui-icon name="intellij"></ui-icon></task-item><task-item><ui-icon name="beaver"></ui-icon></task-item><task-item><ui-icon name="eball"></ui-icon></task-item><task-item open><ui-icon name="chrome"></ui-icon></task-item><task-item open><ui-icon name="notepad"></ui-icon></task-item><task-item open alert soft><ui-icon name="teams"></ui-icon></task-item></div>
<div class="tray"><button class="temp"><ui-icon name="weather"></ui-icon>30°C</button><div class="ic"><ui-icon name="up"></ui-icon><ui-icon name="meet"></ui-icon><ui-icon name="battery"></ui-icon><ui-icon name="wifi"></ui-icon></div>
<div class="two lang">ENG<br>IN</div><div class="two clock">4:21 PM<br>1/24/2023</div><button aria-label="Notifications"><ui-icon name="notice"></ui-icon></button><span class="edge"></span></div>`);

define('desktop-screen', `<style>:host{display:flex;flex-direction:column;height:100vh}</style>
<browser-toolbar></browser-toolbar><bookmarks-bar></bookmarks-bar><notice-bar></notice-bar><app-header></app-header><work-space></work-space><task-bar></task-bar>`);
</script>
</body>
</html>
